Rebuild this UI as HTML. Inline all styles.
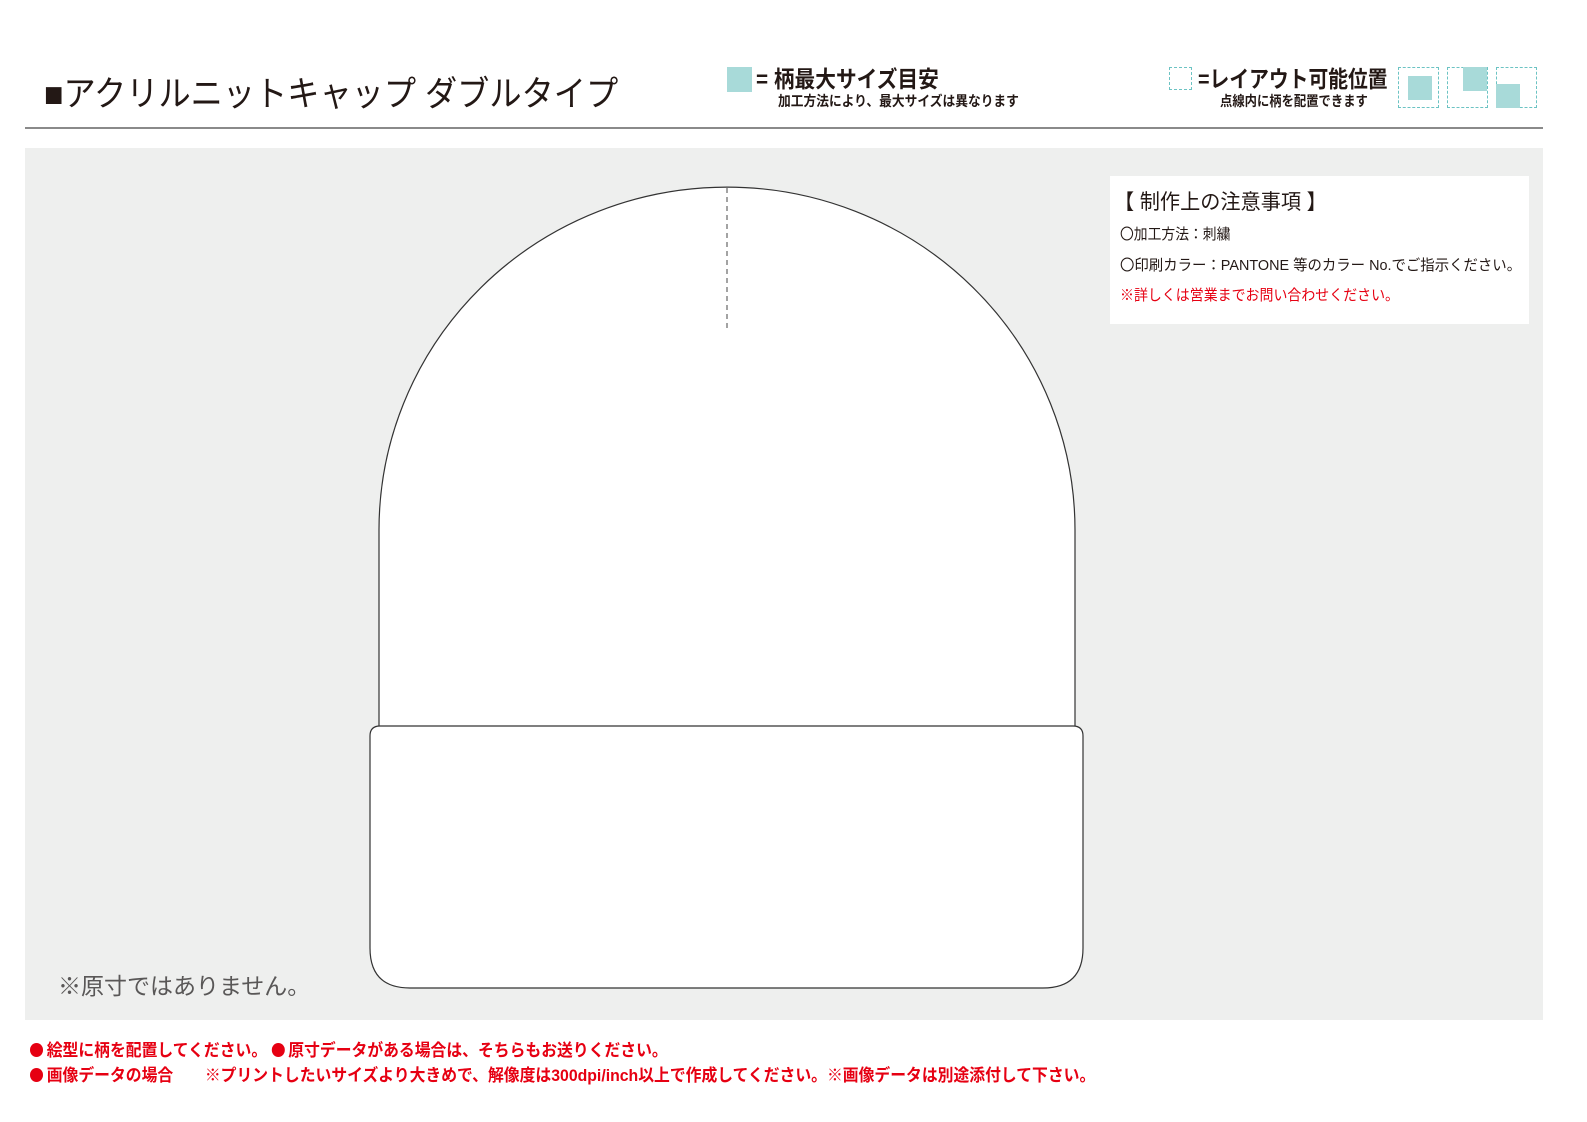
<!DOCTYPE html>
<html><head><meta charset="utf-8"><style>
body{margin:0;width:1587px;height:1122px;background:#fff;position:relative;overflow:hidden;font-family:"Liberation Sans","Noto Sans CJK JP",sans-serif;color:#231815}
.a{position:absolute;white-space:nowrap;transform-origin:0 0}
.d{display:inline-block;width:14px;height:14px;border-radius:50%;background:#e60012;vertical-align:-1px;margin-right:4px}
</style></head><body>
<div class="a" style="left:44px;top:74px;font-size:35px;line-height:42px;transform:scaleX(0.92)">■アクリルニットキャップ ダブルタイプ</div>
<div class="a" style="left:727px;top:67px;width:25px;height:25px;background:#a8dad9"></div>
<div class="a" style="left:756px;top:64px;font-size:23px;font-weight:bold;line-height:30px;transform:scaleX(0.9)">= 柄最大サイズ目安</div>
<div class="a" style="left:778px;top:92px;font-size:14px;font-weight:bold;line-height:18px;transform:scaleX(0.91)">加工方法により、最大サイズは異なります</div>
<div class="a" style="left:1169px;top:67px;width:23px;height:23px;border:1.5px dashed #6cc3c3;box-sizing:border-box"></div>
<div class="a" style="left:1198px;top:64px;font-size:23px;font-weight:bold;line-height:30px;transform:scaleX(0.86)">=レイアウト可能位置</div>
<div class="a" style="left:1220px;top:92px;font-size:14px;font-weight:bold;line-height:18px;transform:scaleX(0.88)">点線内に柄を配置できます</div>
<div class="a" style="left:1398px;top:67px;width:41px;height:41px;border:1.5px dashed #6cc3c3;box-sizing:border-box"><div style="position:absolute;left:9px;top:8px;width:24px;height:24px;background:#a8dad9"></div></div>
<div class="a" style="left:1447px;top:67px;width:41px;height:41px;border:1.5px dashed #6cc3c3;box-sizing:border-box"><div style="position:absolute;left:15px;top:-1px;width:24px;height:24px;background:#a8dad9"></div></div>
<div class="a" style="left:1496px;top:67px;width:41px;height:41px;border:1.5px dashed #6cc3c3;box-sizing:border-box"><div style="position:absolute;left:-1px;top:16px;width:24px;height:24px;background:#a8dad9"></div></div>
<div class="a" style="left:25px;top:127px;width:1518px;height:2px;background:#8a8a8a"></div>
<div class="a" style="left:25px;top:148px;width:1518px;height:872px;background:#eeefee"></div>
<svg class="a" style="left:0;top:0" width="1587" height="1122">
<path d="M379 726 L379 530 A348 343 0 0 1 1075 530 L1075 726" fill="#fff" stroke="#333" stroke-width="1.2"/>
<line x1="727" y1="188" x2="727" y2="332" stroke="#666" stroke-width="1.2" stroke-dasharray="5,4"/>
<path d="M380 726 L1073 726 Q1083 726 1083 736 L1083 948 Q1083 988 1043 988 L410 988 Q370 988 370 948 L370 736 Q370 726 380 726 Z" fill="#fff" stroke="#333" stroke-width="1.2"/>
</svg>
<div class="a" style="left:1110px;top:176px;width:419px;height:148px;background:#fff"></div>
<div class="a" style="left:1114px;top:188px;font-size:21px;line-height:30px;transform:scaleX(0.96)">【 制作上の注意事項 】</div>
<div class="a" style="left:1120px;top:225px;font-size:15px;line-height:20px;transform:scaleX(0.92)">〇加工方法：刺繍</div>
<div class="a" style="left:1120px;top:256px;font-size:15px;line-height:20px;transform:scaleX(0.96)">〇印刷カラー：PANTONE 等のカラー No.でご指示ください。</div>
<div class="a" style="left:1120px;top:286px;font-size:15px;line-height:20px;color:#e60012;transform:scaleX(0.93)">※詳しくは営業までお問い合わせください。</div>
<div class="a" style="left:58px;top:971px;font-size:23px;line-height:30px;color:#595757">※原寸ではありません。</div>
<div class="a" style="left:30px;top:1040px;font-size:17px;font-weight:bold;line-height:22px;color:#e60012;transform:scaleX(0.93)"><span class="d"></span>絵型に柄を配置してください。 <span class="d"></span>原寸データがある場合は、そちらもお送りください。</div>
<div class="a" style="left:30px;top:1065px;font-size:17px;font-weight:bold;line-height:22px;color:#e60012;transform:scaleX(0.93)"><span class="d"></span>画像データの場合　　※プリントしたいサイズより大きめで、解像度は300dpi/inch以上で作成してください。※画像データは別途添付して下さい。</div>
</body></html>
